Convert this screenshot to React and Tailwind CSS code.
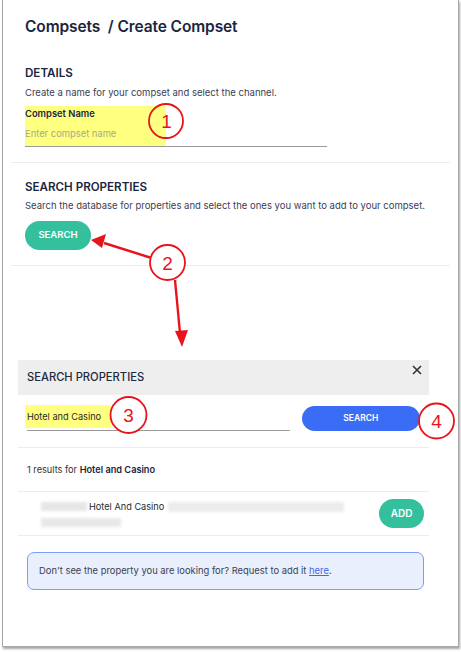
export default function App() {
  return (
    <div className="relative w-[461px] h-[652px] bg-white font-['Inter','Liberation_Sans',sans-serif] text-[#1b2540]">
      <div className="ml-[2px] w-[457px] h-[647px] border-l border-r border-b border-[#a8a8a8] shadow-[1px_2px_2px_rgba(0,0,0,0.35)] bg-white">
        {/* details */}
        <div className="px-[22px] pt-[17px]">
          <h1 className="text-[15.5px] leading-[20px] font-semibold tracking-[-0.1px]">Compsets&nbsp; / Create Compset</h1>
          <h2 className="mt-[28px] text-[11.6px] leading-[16px] font-semibold">DETAILS</h2>
          <p className="mt-[6px] text-[9.5px] leading-[12px] text-[#3a4154]">Create a name for your compset and select the channel.</p>
          <div className="mt-[7px] w-[302px] h-[41px] border-b border-[#9a9a9a]">
            <div className="w-[141px] h-full bg-[#ffff80] pt-[2px]">
              <div className="text-[9.4px] leading-[12px] font-semibold">Compset Name</div>
              <div className="mt-[8px] text-[9.4px] leading-[12px] text-[#a6a98a]">Enter compset name</div>
            </div>
          </div>
        </div>
        <div className="mx-[8px] mt-[15px] border-t border-[#ececec]" />
        {/* search properties */}
        <div className="px-[22px] pt-[16px]">
          <h2 className="text-[11.6px] leading-[16px] font-semibold">SEARCH PROPERTIES</h2>
          <p className="mt-[5px] text-[9.5px] leading-[12px] text-[#3a4154]">Search the database for properties and select the ones you want to add to your compset.</p>
          <button className="mt-[9px] w-[66px] h-[29px] rounded-full bg-[#35c09d] text-white text-[9.5px] font-semibold">SEARCH</button>
        </div>
        <div className="mx-[8px] mt-[15px] border-t border-[#ececec]" />

        {/* modal */}
        <div className="ml-[15px] mt-[94px] w-[411px]">
          <div className="relative h-[35px] bg-[#eeeeee] px-[9px] flex items-center">
            <span className="text-[11.2px] font-medium text-[#1f2940]">SEARCH PROPERTIES</span>
            <svg className="absolute right-[7px] top-[5px]" width="10" height="10" viewBox="0 0 10 10">
              <path d="M1 1L9 9M9 1L1 9" stroke="#333" strokeWidth="1.6" />
            </svg>
          </div>
          <div className="flex items-end px-[9px] pt-[10px] pb-[16px] border-b border-[#ececec]">
            <div className="w-[264px] h-[26px] border-b border-[#9a9a9a]">
              <div className="w-[86px] h-[23px] -ml-[2px] pl-[2px] bg-[#ffff80] flex items-center text-[9.2px] text-[#2a2a2a]">Hotel and Casino</div>
            </div>
            <button className="ml-[12px] w-[119px] h-[25px] rounded-full bg-[#3b6cf6] text-white text-[8.5px] font-semibold">SEARCH</button>
          </div>
          <div className="h-[44px] px-[9px] flex items-center border-b border-[#ececec] text-[9.2px]">
            <span className="text-[#333]">1 results for&nbsp;</span>
            <span className="font-semibold">Hotel and Casino</span>
          </div>
          <div className="h-[44px] flex items-center justify-between border-b border-[#ececec] pl-[23px] pr-[5px]">
            <div className="text-[9.2px] text-[#2a2a2a]">
              <div className="flex items-center gap-[2px]">
                <span className="inline-block w-[46px] h-[9px] bg-[#e6e6e6] blur-[1.5px]" />
                <span>Hotel And Casino</span>
                <span className="inline-block ml-[2px] w-[176px] h-[10px] bg-[#ececec] blur-[1.5px]" />
              </div>
              <span className="block mt-[4px] w-[80px] h-[9px] bg-[#e8e8e8] blur-[1.5px]" />
            </div>
            <button className="w-[45px] h-[29px] rounded-full bg-[#35c09d] text-white text-[10px] font-semibold">ADD</button>
          </div>
          <div className="ml-[9px] mr-[5px] mt-[16px] h-[38px] rounded-[7px] border border-[#7b9cf7] bg-[#e9effc] flex items-center px-[11px] text-[9.4px] text-[#3a4154]">
            <span>Don't see the property you are looking for? Request to add it <span className="text-[#4466ee] underline">here</span>.</span>
          </div>
        </div>
      </div>

      {/* annotations */}
      <svg className="absolute inset-0 pointer-events-none" width="461" height="652" viewBox="0 0 461 652">
        <g fill="none" stroke="#e8141c" strokeWidth="1.8">
          <circle cx="166" cy="121" r="17" />
          <circle cx="167.5" cy="262.5" r="17.5" fill="white" />
          <circle cx="128.5" cy="415" r="18" fill="white" />
          <circle cx="436.5" cy="421" r="17.5" fill="white" />
          <path d="M150 257.5L104 243" strokeWidth="2.4" />
          <path d="M175 280L180 333" strokeWidth="2.4" />
        </g>
        <polygon points="91,240 106,234 102,248" fill="#e8141c" />
        <polygon points="182,347 175,331 188,330" fill="#e8141c" />
        <g fill="#e8141c" fontFamily="Liberation Sans, Arial, sans-serif" fontSize="19" textAnchor="middle">
          <text x="166.5" y="128">1</text>
          <text x="167.5" y="269.5">2</text>
          <text x="128.5" y="422">3</text>
          <text x="436.5" y="428">4</text>
        </g>
      </svg>
    </div>
  );
}
